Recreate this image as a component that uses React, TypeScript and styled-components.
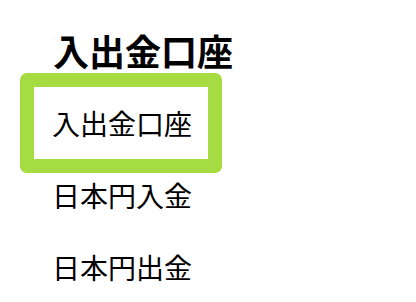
import React from "react";
import styled, { createGlobalStyle } from "styled-components";

const Global = createGlobalStyle`
  html, body { margin: 0; padding: 0; background: #ffffff; }
  body { font-family: "Noto Sans CJK JP", "Noto Sans", sans-serif; color: #000; }
`;

const Page = styled.div`
  width: 416px;
  height: 302px;
  overflow: hidden;
  padding: 32px 0 0 34px;
  box-sizing: border-box;
`;

const Title = styled.h1`
  margin: 0 0 19px 0;
  padding-left: 19px;
  font-size: 36px;
  line-height: 36px;
  font-weight: 700;
`;

const List = styled.ul`
  list-style: none;
  margin: 0;
  padding: 0;
  width: 174px;
`;

const Item = styled.li<{ $active?: boolean }>`
  display: flex;
  align-items: center;
  height: 72px;
  padding-left: 18px;
  font-size: 28px;
  font-weight: 400;
  box-sizing: content-box;
  ${(p) =>
    p.$active &&
    `
    margin: -14px;
    border: 14px solid #a5dc42;
    border-radius: 7px;
  `}
`;

const items = ["入出金口座", "日本円入金", "日本円出金"];

export default function App() {
  return (
    <>
      <Global />
      <Page>
        <Title>入出金口座</Title>
        <List>
          {items.map((t, i) => (
            <Item key={t} $active={i === 0}>
              {t}
            </Item>
          ))}
        </List>
      </Page>
    </>
  );
}
